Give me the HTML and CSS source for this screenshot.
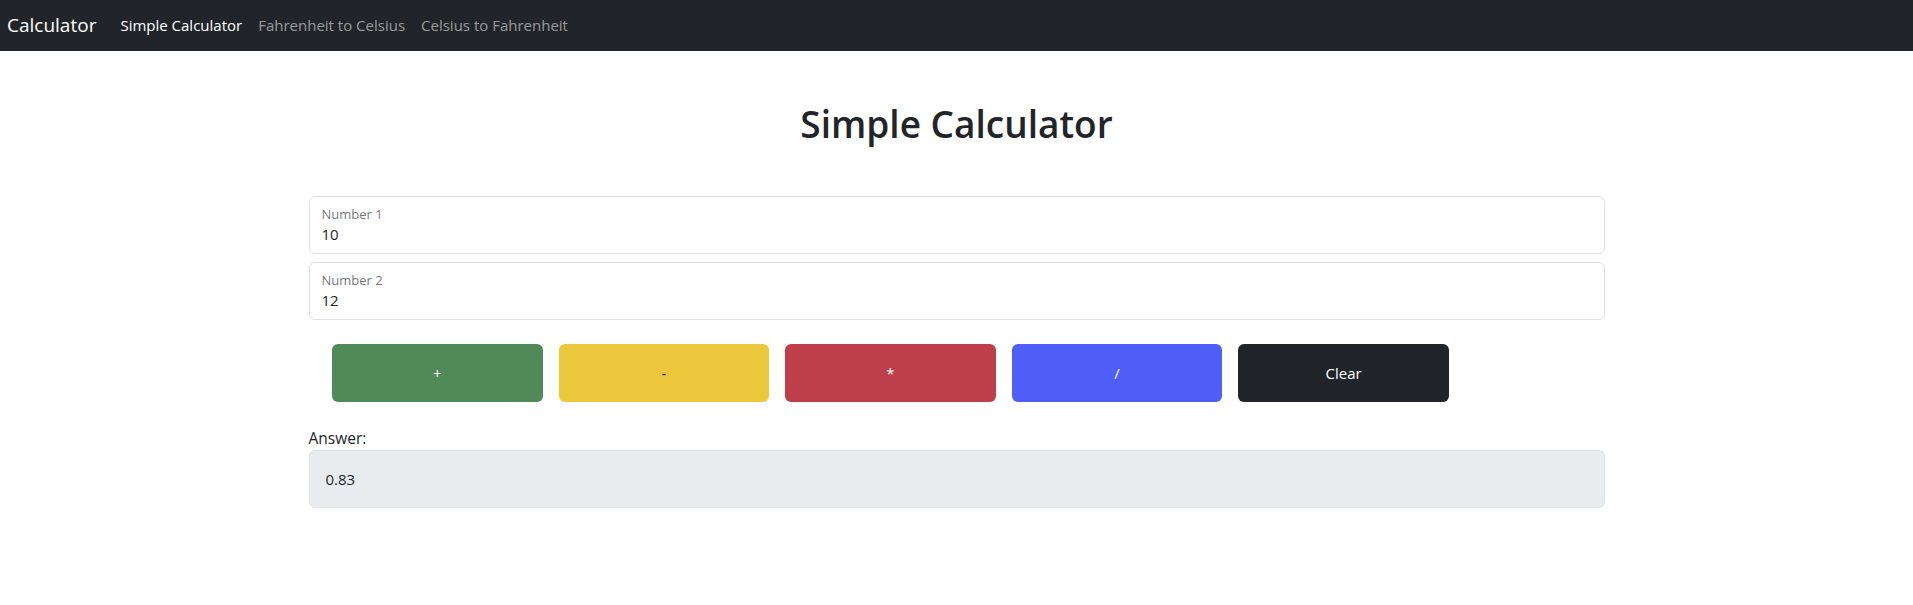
FILE: index.html
```html
<!DOCTYPE html>
<html lang="en">
<head>
<meta charset="utf-8">
<title>Simple Calculator</title>
<link rel="stylesheet" href="styles.css">
</head>
<body>
<nav class="navbar">
  <a class="brand" href="#">Calculator</a>
  <ul class="nav-links">
    <li><a class="nav-link active" href="#">Simple Calculator</a></li>
    <li><a class="nav-link" href="#">Fahrenheit to Celsius</a></li>
    <li><a class="nav-link" href="#">Celsius to Fahrenheit</a></li>
  </ul>
</nav>
<main class="container">
  <h1 class="title">Simple Calculator</h1>
  <div class="field">
    <label class="field-label" for="n1">Number 1</label>
    <input class="field-input" id="n1" type="text" value="10">
  </div>
  <div class="field">
    <label class="field-label" for="n2">Number 2</label>
    <input class="field-input" id="n2" type="text" value="12">
  </div>
  <div class="ops">
    <button class="op op-add">+</button>
    <button class="op op-sub">-</button>
    <button class="op op-mul">*</button>
    <button class="op op-div">/</button>
    <button class="op op-clear">Clear</button>
  </div>
  <div class="answer-label">Answer:</div>
  <div class="answer">0.83</div>
</main>
</body>
</html>
```
FILE: styles.css
```css
* { box-sizing: border-box; }
body {
  margin: 0;
  font-family: "Open Sans", "Noto Sans", sans-serif;
  font-size: 16px;
  line-height: 1.5;
  color: #212529;
  background: #fff;
}
.navbar {
  height: 51px;
  background: #212529;
  display: flex;
  align-items: center;
  padding-left: 7px;
}
.brand {
  color: #fff;
  text-decoration: none;
  font-size: 19px;
  margin-right: 16px;
}
.nav-links {
  list-style: none;
  margin: 0;
  padding: 0;
  display: flex;
}
.nav-link {
  display: block;
  padding: 8px;
  color: rgba(255,255,255,.55);
  text-decoration: none;
  font-size: 15px;
}
.nav-link.active { color: #fff; }
.container {
  width: 1296px;
  margin: 0 auto;
}
.title {
  margin: 49px 0 48px;
  text-align: center;
  font-size: 37px;
  font-weight: 600;
  line-height: 48px;
}
.field {
  height: 58px;
  border: 1px solid #dee2e6;
  border-radius: 6px;
  padding: 9px 12px 0;
  display: flex;
  flex-direction: column;
  margin-bottom: 8px;
}
.field-label {
  font-size: 13px;
  line-height: 16px;
  color: rgba(33,37,41,.65);
}
.field-input {
  border: none;
  outline: none;
  padding: 0;
  margin: 0;
  font: inherit;
  font-size: 15px;
  line-height: 24px;
  height: 24px;
  color: #212529;
  background: transparent;
}
.ops {
  display: flex;
  gap: 16px;
  padding-left: 23.5px;
  margin-top: 24px;
}
.op {
  width: 210.6px;
  height: 58px;
  border: none;
  border-radius: 6px;
  font: inherit;
  font-size: 15px;
  color: #fff;
}
.op-add { background: #4f8a58; }
.op-sub { background: #ebc73b; color: #000; }
.op-mul { background: #bf3e4b; }
.op-div { background: #4f5ef7; }
.op-clear { background: #212529; }
.answer-label {
  margin-top: 24px;
  font-size: 15.5px;
  line-height: 24px;
}
.answer {
  height: 58px;
  background: #e9ecef;
  border: 1px solid #dee2e6;
  border-radius: 6px;
  padding-left: 16px;
  display: flex;
  align-items: center;
  font-size: 15px;
}
```
